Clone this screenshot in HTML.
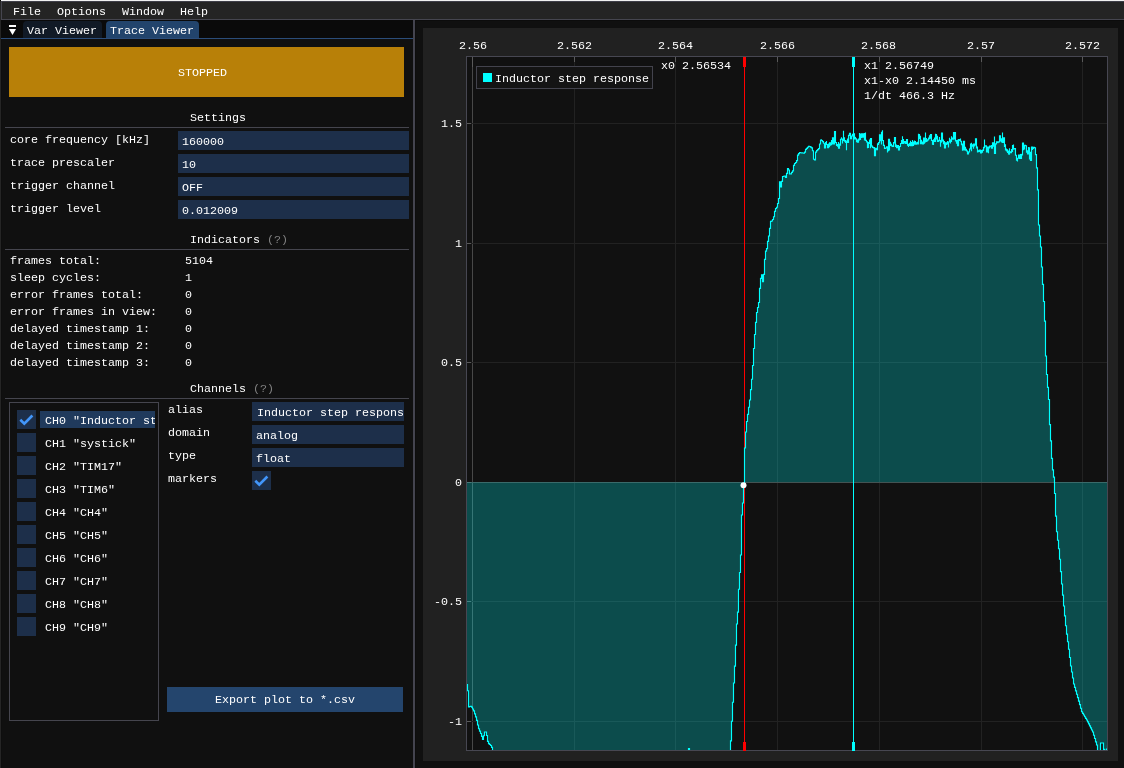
<!DOCTYPE html>
<html><head><meta charset="utf-8">
<style>
*{margin:0;padding:0;box-sizing:border-box}
html,body{width:1124px;height:768px;overflow:hidden;background:#101010}
body{position:relative;font-family:"Liberation Mono",monospace;font-size:11.67px;line-height:13px;color:#fff}
.a{position:absolute}
.t{position:absolute;white-space:pre;height:13px;margin-top:2px}
.g{color:#808080}
.fld{position:absolute;background:#1d2f4a;height:19px}
.chk{position:absolute;background:#1d2f4a;width:19px;height:19px}
</style></head><body><div id="root" style="position:absolute;left:0;top:0;width:1124px;height:768px;will-change:transform">
<!-- top line and menu bar -->
<div class="a" style="left:0;top:0;width:1124px;height:1px;background:#f0f0f0"></div>
<div class="a" style="left:0;top:0;width:1px;height:1px;background:#050505"></div>
<div class="a" style="left:0;top:1px;width:1124px;height:18px;background:#242424"></div>
<div class="a" style="left:1px;top:1px;width:1123px;height:1px;background:#3e3e48"></div>
<div class="a" style="left:1px;top:1px;width:1px;height:19px;background:#45454f"></div>
<div class="a" style="left:1px;top:19px;width:1123px;height:1px;background:#45454f"></div>
<div class="t" style="left:13px;top:4px">File</div>
<div class="t" style="left:57px;top:4px">Options</div>
<div class="t" style="left:122px;top:4px">Window</div>
<div class="t" style="left:180px;top:4px">Help</div>

<!-- left window -->
<div class="a" style="left:0;top:20px;width:413px;height:748px;background:#101010"></div>
<div class="a" style="left:0;top:1px;width:1px;height:767px;background:#252525"></div>
<div class="a" style="left:1px;top:39px;width:1px;height:729px;background:#0e0e0e"></div>
<div class="a" style="left:1px;top:20px;width:412px;height:18px;background:#0a0a0a"></div>
<div class="a" style="left:1px;top:38px;width:412px;height:1px;background:#2b4d7a"></div>
<!-- tab dropdown icon -->
<div class="a" style="left:9px;top:25px;width:7px;height:2px;background:#fff"></div>
<svg class="a" style="left:0;top:0" width="30" height="40"><polygon points="9,29 16,29 12.5,35" fill="#fff"/></svg>
<div class="a" style="left:23px;top:21px;width:79px;height:17px;background:#111a26;border-radius:4px 4px 0 0"></div>
<div class="t" style="left:27px;top:23px">Var Viewer</div>
<div class="a" style="left:106px;top:21px;width:93px;height:17px;background:#22446c;border-radius:4px 4px 0 0"></div>
<div class="t" style="left:110px;top:23px">Trace Viewer</div>

<div class="a" style="left:9px;top:47px;width:395px;height:50px;background:#b88008"></div>
<div class="t" style="left:178px;top:65px">STOPPED</div>

<div class="t" style="left:190px;top:110px">Settings</div>
<div class="a" style="left:5px;top:127px;width:404px;height:1px;background:#45454e"></div>
<div class="t" style="left:10px;top:132px">core frequency [kHz]</div>
<div class="t" style="left:10px;top:155px">trace prescaler</div>
<div class="t" style="left:10px;top:178px">trigger channel</div>
<div class="t" style="left:10px;top:201px">trigger level</div>
<div class="fld" style="left:178px;top:131px;width:231px"></div>
<div class="fld" style="left:178px;top:154px;width:231px"></div>
<div class="fld" style="left:178px;top:177px;width:231px"></div>
<div class="fld" style="left:178px;top:200px;width:231px"></div>
<div class="t" style="left:182px;top:134px">160000</div>
<div class="t" style="left:182px;top:157px">10</div>
<div class="t" style="left:182px;top:180px">OFF</div>
<div class="t" style="left:182px;top:203px">0.012009</div>

<div class="t" style="left:190px;top:232px">Indicators <span class="g">(?)</span></div>
<div class="a" style="left:5px;top:249px;width:404px;height:1px;background:#45454e"></div>
<div class="t" style="left:10px;top:253px">frames total:</div>
<div class="t" style="left:10px;top:270px">sleep cycles:</div>
<div class="t" style="left:10px;top:287px">error frames total:</div>
<div class="t" style="left:10px;top:304px">error frames in view:</div>
<div class="t" style="left:10px;top:321px">delayed timestamp 1:</div>
<div class="t" style="left:10px;top:338px">delayed timestamp 2:</div>
<div class="t" style="left:10px;top:355px">delayed timestamp 3:</div>
<div class="t" style="left:185px;top:253px">5104</div>
<div class="t" style="left:185px;top:270px">1</div>
<div class="t" style="left:185px;top:287px">0</div>
<div class="t" style="left:185px;top:304px">0</div>
<div class="t" style="left:185px;top:321px">0</div>
<div class="t" style="left:185px;top:338px">0</div>
<div class="t" style="left:185px;top:355px">0</div>

<div class="t" style="left:190px;top:381px">Channels <span class="g">(?)</span></div>
<div class="a" style="left:5px;top:398px;width:404px;height:1px;background:#45454e"></div>
<!-- child window -->
<div class="a" style="left:9px;top:402px;width:150px;height:319px;border:1px solid #45454e"></div>
<div class="a" style="left:40px;top:411px;width:115px;height:17px;background:#203a5c"></div>
<div class="chk" style="left:17px;top:410px"></div><div class="chk" style="left:17px;top:433px"></div><div class="chk" style="left:17px;top:456px"></div><div class="chk" style="left:17px;top:479px"></div><div class="chk" style="left:17px;top:502px"></div><div class="chk" style="left:17px;top:525px"></div><div class="chk" style="left:17px;top:548px"></div><div class="chk" style="left:17px;top:571px"></div><div class="chk" style="left:17px;top:594px"></div><div class="chk" style="left:17px;top:617px"></div>
<svg class="a" style="left:17px;top:410px" width="19" height="19"><path d="M3.3,9.8 L7.3,13.7 L15.4,5.5" fill="none" stroke="#4296fa" stroke-width="2.6"/></svg>
<div class="a" style="left:44px;top:410px;width:111px;height:20px;overflow:hidden"><div class="t" style="left:1px;top:3px">CH0 "Inductor step response"</div></div>
<div class="t" style="left:45px;top:436px">CH1 "systick"</div><div class="t" style="left:45px;top:459px">CH2 "TIM17"</div><div class="t" style="left:45px;top:482px">CH3 "TIM6"</div><div class="t" style="left:45px;top:505px">CH4 "CH4"</div><div class="t" style="left:45px;top:528px">CH5 "CH5"</div><div class="t" style="left:45px;top:551px">CH6 "CH6"</div><div class="t" style="left:45px;top:574px">CH7 "CH7"</div><div class="t" style="left:45px;top:597px">CH8 "CH8"</div><div class="t" style="left:45px;top:620px">CH9 "CH9"</div>

<div class="t" style="left:168px;top:402px">alias</div>
<div class="t" style="left:168px;top:425px">domain</div>
<div class="t" style="left:168px;top:448px">type</div>
<div class="t" style="left:168px;top:471px">markers</div>
<div class="fld" style="left:252px;top:402px;width:152px;overflow:hidden"><div class="t" style="left:5px;top:3px">Inductor step response</div></div>
<div class="fld" style="left:252px;top:425px;width:152px"></div>
<div class="fld" style="left:252px;top:448px;width:152px"></div>
<div class="t" style="left:256px;top:428px">analog</div>
<div class="t" style="left:256px;top:451px">float</div>
<div class="chk" style="left:252px;top:471px"></div>
<svg class="a" style="left:252px;top:471px" width="19" height="19"><path d="M3.3,9.8 L7.3,13.7 L15.4,5.5" fill="none" stroke="#4296fa" stroke-width="2.6"/></svg>

<div class="a" style="left:167px;top:687px;width:236px;height:25px;background:#24456d"></div>
<div class="t" style="left:215px;top:692px">Export plot to *.csv</div>

<!-- divider -->
<div class="a" style="left:413px;top:20px;width:2px;height:748px;background:#44444f"></div>

<!-- right window -->
<div class="a" style="left:415px;top:20px;width:709px;height:748px;background:#101010"></div>
<div class="a" style="left:415px;top:20px;width:709px;height:1px;background:#0c0c0c"></div>
<div class="a" style="left:415px;top:20px;width:1px;height:748px;background:#0d0d0d"></div>
<div class="a" style="left:423px;top:28px;width:695px;height:733px;background:#212121"></div>
<svg class="a" style="left:0;top:0" width="1124" height="768">
<defs><clipPath id="pc"><rect x="467" y="57" width="640" height="693"/></clipPath></defs>
<rect x="466.5" y="56.5" width="641" height="694" fill="#111111" stroke="#474752" stroke-width="1"/>
<g clip-path="url(#pc)">
<rect x="472" y="57" width="1" height="693" fill="#484848"/>
<rect x="472" y="57" width="1" height="10" fill="#5a5a5a"/>
<rect x="574" y="57" width="1" height="693" fill="#222222"/>
<rect x="574" y="57" width="1" height="5" fill="#5a5a5a"/>
<rect x="675" y="57" width="1" height="693" fill="#222222"/>
<rect x="675" y="57" width="1" height="5" fill="#5a5a5a"/>
<rect x="777" y="57" width="1" height="693" fill="#222222"/>
<rect x="777" y="57" width="1" height="5" fill="#5a5a5a"/>
<rect x="879" y="57" width="1" height="693" fill="#222222"/>
<rect x="879" y="57" width="1" height="5" fill="#5a5a5a"/>
<rect x="981" y="57" width="1" height="693" fill="#222222"/>
<rect x="981" y="57" width="1" height="5" fill="#5a5a5a"/>
<rect x="1082" y="57" width="1" height="693" fill="#222222"/>
<rect x="1082" y="57" width="1" height="5" fill="#5a5a5a"/>
<rect x="467" y="123" width="640" height="1" fill="#222222"/>
<rect x="467" y="123" width="4" height="1" fill="#5a5a5a"/>
<rect x="467" y="243" width="640" height="1" fill="#222222"/>
<rect x="467" y="243" width="4" height="1" fill="#5a5a5a"/>
<rect x="467" y="362" width="640" height="1" fill="#222222"/>
<rect x="467" y="362" width="4" height="1" fill="#5a5a5a"/>
<rect x="467" y="482" width="640" height="1" fill="#484848"/>
<rect x="467" y="482" width="4" height="1" fill="#5a5a5a"/>
<rect x="467" y="601" width="640" height="1" fill="#222222"/>
<rect x="467" y="601" width="4" height="1" fill="#5a5a5a"/>
<rect x="467" y="721" width="640" height="1" fill="#222222"/>
<rect x="467" y="721" width="4" height="1" fill="#5a5a5a"/>
<rect x="744" y="57" width="1" height="693" fill="#ff0000"/>
<rect x="743" y="57" width="3" height="10" fill="#ff0000"/>
<rect x="853" y="57" width="1" height="693" fill="#00ffff"/>
<rect x="852" y="57" width="3" height="10" fill="#00ffff"/>
<path d="M466.5,482.3 L466.5,684.5 L467.5,684.5 L467.5,690.7 L468.5,690.7 L468.5,706.9 L469.5,706.9 L469.5,706.5 L470.5,706.5 L470.5,706.2 L471.5,706.2 L471.5,707.1 L472.5,707.1 L472.5,709.0 L473.5,709.0 L473.5,710.8 L474.5,710.8 L474.5,713.8 L475.5,713.8 L475.5,716.8 L476.5,716.8 L476.5,720.4 L477.5,720.4 L477.5,725.0 L478.5,725.0 L478.5,728.7 L479.5,728.7 L479.5,731.1 L480.5,731.1 L480.5,733.5 L481.5,733.5 L481.5,736.4 L482.5,736.4 L482.5,739.4 L483.5,739.4 L483.5,735.7 L484.5,735.7 L484.5,732.0 L485.5,732.0 L485.5,732.0 L486.5,732.0 L486.5,735.5 L487.5,735.5 L487.5,741.3 L488.5,741.3 L488.5,743.6 L489.5,743.6 L489.5,744.5 L490.5,744.5 L490.5,745.5 L491.5,745.5 L491.5,747.3 L492.5,747.3 L492.5,750.5 L493.5,750.5 L493.5,755.2 L494.5,755.2 L494.5,760.0 L495.5,760.0 L495.5,760.0 L496.5,760.0 L496.5,760.0 L497.5,760.0 L497.5,760.0 L498.5,760.0 L498.5,760.0 L499.5,760.0 L499.5,760.0 L500.5,760.0 L500.5,760.0 L501.5,760.0 L501.5,760.0 L502.5,760.0 L502.5,760.0 L503.5,760.0 L503.5,760.0 L504.5,760.0 L504.5,760.0 L505.5,760.0 L505.5,760.0 L506.5,760.0 L506.5,760.0 L507.5,760.0 L507.5,760.0 L508.5,760.0 L508.5,760.0 L509.5,760.0 L509.5,760.0 L510.5,760.0 L510.5,760.0 L511.5,760.0 L511.5,760.0 L512.5,760.0 L512.5,760.0 L513.5,760.0 L513.5,760.0 L514.5,760.0 L514.5,760.0 L515.5,760.0 L515.5,760.0 L516.5,760.0 L516.5,760.0 L517.5,760.0 L517.5,760.0 L518.5,760.0 L518.5,760.0 L519.5,760.0 L519.5,760.0 L520.5,760.0 L520.5,760.0 L521.5,760.0 L521.5,760.0 L522.5,760.0 L522.5,760.0 L523.5,760.0 L523.5,760.0 L524.5,760.0 L524.5,760.0 L525.5,760.0 L525.5,760.0 L526.5,760.0 L526.5,760.0 L527.5,760.0 L527.5,760.0 L528.5,760.0 L528.5,760.0 L529.5,760.0 L529.5,760.0 L530.5,760.0 L530.5,760.0 L531.5,760.0 L531.5,760.0 L532.5,760.0 L532.5,760.0 L533.5,760.0 L533.5,760.0 L534.5,760.0 L534.5,760.0 L535.5,760.0 L535.5,760.0 L536.5,760.0 L536.5,760.0 L537.5,760.0 L537.5,760.0 L538.5,760.0 L538.5,760.0 L539.5,760.0 L539.5,760.0 L540.5,760.0 L540.5,760.0 L541.5,760.0 L541.5,760.0 L542.5,760.0 L542.5,760.0 L543.5,760.0 L543.5,760.0 L544.5,760.0 L544.5,760.0 L545.5,760.0 L545.5,760.0 L546.5,760.0 L546.5,760.0 L547.5,760.0 L547.5,760.0 L548.5,760.0 L548.5,760.0 L549.5,760.0 L549.5,760.0 L550.5,760.0 L550.5,760.0 L551.5,760.0 L551.5,760.0 L552.5,760.0 L552.5,760.0 L553.5,760.0 L553.5,760.0 L554.5,760.0 L554.5,760.0 L555.5,760.0 L555.5,760.0 L556.5,760.0 L556.5,760.0 L557.5,760.0 L557.5,760.0 L558.5,760.0 L558.5,760.0 L559.5,760.0 L559.5,760.0 L560.5,760.0 L560.5,760.0 L561.5,760.0 L561.5,760.0 L562.5,760.0 L562.5,760.0 L563.5,760.0 L563.5,760.0 L564.5,760.0 L564.5,760.0 L565.5,760.0 L565.5,760.0 L566.5,760.0 L566.5,760.0 L567.5,760.0 L567.5,760.0 L568.5,760.0 L568.5,760.0 L569.5,760.0 L569.5,760.0 L570.5,760.0 L570.5,760.0 L571.5,760.0 L571.5,760.0 L572.5,760.0 L572.5,760.0 L573.5,760.0 L573.5,760.0 L574.5,760.0 L574.5,760.0 L575.5,760.0 L575.5,760.0 L576.5,760.0 L576.5,760.0 L577.5,760.0 L577.5,760.0 L578.5,760.0 L578.5,760.0 L579.5,760.0 L579.5,760.0 L580.5,760.0 L580.5,760.0 L581.5,760.0 L581.5,760.0 L582.5,760.0 L582.5,760.0 L583.5,760.0 L583.5,760.0 L584.5,760.0 L584.5,760.0 L585.5,760.0 L585.5,760.0 L586.5,760.0 L586.5,760.0 L587.5,760.0 L587.5,760.0 L588.5,760.0 L588.5,760.0 L589.5,760.0 L589.5,760.0 L590.5,760.0 L590.5,760.0 L591.5,760.0 L591.5,760.0 L592.5,760.0 L592.5,760.0 L593.5,760.0 L593.5,760.0 L594.5,760.0 L594.5,760.0 L595.5,760.0 L595.5,760.0 L596.5,760.0 L596.5,760.0 L597.5,760.0 L597.5,760.0 L598.5,760.0 L598.5,760.0 L599.5,760.0 L599.5,760.0 L600.5,760.0 L600.5,760.0 L601.5,760.0 L601.5,760.0 L602.5,760.0 L602.5,760.0 L603.5,760.0 L603.5,760.0 L604.5,760.0 L604.5,760.0 L605.5,760.0 L605.5,760.0 L606.5,760.0 L606.5,760.0 L607.5,760.0 L607.5,760.0 L608.5,760.0 L608.5,760.0 L609.5,760.0 L609.5,760.0 L610.5,760.0 L610.5,760.0 L611.5,760.0 L611.5,760.0 L612.5,760.0 L612.5,760.0 L613.5,760.0 L613.5,760.0 L614.5,760.0 L614.5,760.0 L615.5,760.0 L615.5,760.0 L616.5,760.0 L616.5,760.0 L617.5,760.0 L617.5,760.0 L618.5,760.0 L618.5,760.0 L619.5,760.0 L619.5,760.0 L620.5,760.0 L620.5,760.0 L621.5,760.0 L621.5,760.0 L622.5,760.0 L622.5,760.0 L623.5,760.0 L623.5,760.0 L624.5,760.0 L624.5,760.0 L625.5,760.0 L625.5,760.0 L626.5,760.0 L626.5,760.0 L627.5,760.0 L627.5,760.0 L628.5,760.0 L628.5,760.0 L629.5,760.0 L629.5,760.0 L630.5,760.0 L630.5,760.0 L631.5,760.0 L631.5,760.0 L632.5,760.0 L632.5,760.0 L633.5,760.0 L633.5,760.0 L634.5,760.0 L634.5,760.0 L635.5,760.0 L635.5,760.0 L636.5,760.0 L636.5,760.0 L637.5,760.0 L637.5,760.0 L638.5,760.0 L638.5,760.0 L639.5,760.0 L639.5,760.0 L640.5,760.0 L640.5,760.0 L641.5,760.0 L641.5,760.0 L642.5,760.0 L642.5,760.0 L643.5,760.0 L643.5,760.0 L644.5,760.0 L644.5,760.0 L645.5,760.0 L645.5,760.0 L646.5,760.0 L646.5,760.0 L647.5,760.0 L647.5,760.0 L648.5,760.0 L648.5,760.0 L649.5,760.0 L649.5,760.0 L650.5,760.0 L650.5,760.0 L651.5,760.0 L651.5,760.0 L652.5,760.0 L652.5,760.0 L653.5,760.0 L653.5,760.0 L654.5,760.0 L654.5,760.0 L655.5,760.0 L655.5,760.0 L656.5,760.0 L656.5,760.0 L657.5,760.0 L657.5,760.0 L658.5,760.0 L658.5,760.0 L659.5,760.0 L659.5,760.0 L660.5,760.0 L660.5,760.0 L661.5,760.0 L661.5,760.0 L662.5,760.0 L662.5,760.0 L663.5,760.0 L663.5,760.0 L664.5,760.0 L664.5,760.0 L665.5,760.0 L665.5,760.0 L666.5,760.0 L666.5,760.0 L667.5,760.0 L667.5,760.0 L668.5,760.0 L668.5,760.0 L669.5,760.0 L669.5,760.0 L670.5,760.0 L670.5,760.0 L671.5,760.0 L671.5,760.0 L672.5,760.0 L672.5,760.0 L673.5,760.0 L673.5,760.0 L674.5,760.0 L674.5,760.0 L675.5,760.0 L675.5,760.0 L676.5,760.0 L676.5,760.0 L677.5,760.0 L677.5,760.0 L678.5,760.0 L678.5,760.0 L679.5,760.0 L679.5,760.0 L680.5,760.0 L680.5,760.0 L681.5,760.0 L681.5,760.0 L682.5,760.0 L682.5,760.0 L683.5,760.0 L683.5,760.0 L684.5,760.0 L684.5,760.0 L685.5,760.0 L685.5,760.0 L686.5,760.0 L686.5,760.0 L687.5,760.0 L687.5,754.2 L688.5,754.2 L688.5,748.5 L689.5,748.5 L689.5,754.2 L690.5,754.2 L690.5,760.0 L691.5,760.0 L691.5,760.0 L692.5,760.0 L692.5,760.0 L693.5,760.0 L693.5,760.0 L694.5,760.0 L694.5,760.0 L695.5,760.0 L695.5,760.0 L696.5,760.0 L696.5,760.0 L697.5,760.0 L697.5,760.0 L698.5,760.0 L698.5,760.0 L699.5,760.0 L699.5,760.0 L700.5,760.0 L700.5,760.0 L701.5,760.0 L701.5,760.0 L702.5,760.0 L702.5,760.0 L703.5,760.0 L703.5,760.0 L704.5,760.0 L704.5,760.0 L705.5,760.0 L705.5,760.0 L706.5,760.0 L706.5,760.0 L707.5,760.0 L707.5,760.0 L708.5,760.0 L708.5,760.0 L709.5,760.0 L709.5,760.0 L710.5,760.0 L710.5,760.0 L711.5,760.0 L711.5,760.0 L712.5,760.0 L712.5,760.0 L713.5,760.0 L713.5,760.0 L714.5,760.0 L714.5,760.0 L715.5,760.0 L715.5,760.0 L716.5,760.0 L716.5,760.0 L717.5,760.0 L717.5,760.0 L718.5,760.0 L718.5,760.0 L719.5,760.0 L719.5,760.0 L720.5,760.0 L720.5,760.0 L721.5,760.0 L721.5,760.0 L722.5,760.0 L722.5,760.0 L723.5,760.0 L723.5,760.0 L724.5,760.0 L724.5,760.0 L725.5,760.0 L725.5,760.0 L726.5,760.0 L726.5,760.0 L727.5,760.0 L727.5,760.0 L728.5,760.0 L728.5,760.0 L729.5,760.0 L729.5,760.0 L730.5,760.0 L730.5,740.8 L731.5,740.8 L731.5,721.2 L732.5,721.2 L732.5,702.2 L733.5,702.2 L733.5,683.0 L734.5,683.0 L734.5,666.1 L735.5,666.1 L735.5,645.1 L736.5,645.1 L736.5,624.0 L737.5,624.0 L737.5,612.1 L738.5,612.1 L738.5,589.2 L739.5,589.2 L739.5,572.5 L740.5,572.5 L740.5,555.0 L741.5,555.0 L741.5,515.0 L742.5,515.0 L742.5,503.0 L743.5,503.0 L743.5,486.0 L744.5,486.0 L744.5,448.0 L745.5,448.0 L745.5,432.0 L746.5,432.0 L746.5,421.5 L747.5,421.5 L747.5,414.3 L748.5,414.3 L748.5,407.2 L749.5,407.2 L749.5,400.0 L750.5,400.0 L750.5,389.6 L751.5,389.6 L751.5,379.2 L752.5,379.2 L752.5,365.5 L753.5,365.5 L753.5,348.5 L754.5,348.5 L754.5,334.5 L755.5,334.5 L755.5,322.4 L756.5,322.4 L756.5,312.5 L757.5,312.5 L757.5,307.5 L758.5,307.5 L758.5,302.5 L759.5,302.5 L759.5,288.4 L760.5,288.4 L760.5,278.3 L761.5,278.3 L761.5,274.8 L762.5,274.8 L762.5,281.7 L763.5,281.7 L763.5,274.4 L764.5,274.4 L764.5,259.3 L765.5,259.3 L765.5,251.1 L766.5,251.1 L766.5,248.6 L767.5,248.6 L767.5,241.4 L768.5,241.4 L768.5,236.0 L769.5,236.0 L769.5,228.4 L770.5,228.4 L770.5,221.4 L771.5,221.4 L771.5,221.0 L772.5,221.0 L772.5,219.5 L773.5,219.5 L773.5,216.7 L774.5,216.7 L774.5,211.4 L775.5,211.4 L775.5,208.5 L776.5,208.5 L776.5,207.2 L777.5,207.2 L777.5,203.5 L778.5,203.5 L778.5,198.5 L779.5,198.5 L779.5,181.8 L780.5,181.8 L780.5,186.8 L781.5,186.8 L781.5,181.4 L782.5,181.4 L782.5,176.5 L783.5,176.5 L783.5,176.2 L784.5,176.2 L784.5,176.0 L785.5,176.0 L785.5,177.4 L786.5,177.4 L786.5,173.4 L787.5,173.4 L787.5,168.5 L788.5,168.5 L788.5,170.0 L789.5,170.0 L789.5,173.8 L790.5,173.8 L790.5,173.9 L791.5,173.9 L791.5,172.4 L792.5,172.4 L792.5,170.8 L793.5,170.8 L793.5,165.4 L794.5,165.4 L794.5,163.5 L795.5,163.5 L795.5,162.5 L796.5,162.5 L796.5,160.6 L797.5,160.6 L797.5,155.1 L798.5,155.1 L798.5,153.6 L799.5,153.6 L799.5,152.5 L800.5,152.5 L800.5,152.7 L801.5,152.7 L801.5,152.8 L802.5,152.8 L802.5,153.0 L803.5,153.0 L803.5,153.1 L804.5,153.1 L804.5,152.1 L805.5,152.1 L805.5,149.3 L806.5,149.3 L806.5,148.3 L807.5,148.3 L807.5,147.2 L808.5,147.2 L808.5,146.2 L809.5,146.2 L809.5,146.5 L810.5,146.5 L810.5,147.1 L811.5,147.1 L811.5,147.8 L812.5,147.8 L812.5,150.7 L813.5,150.7 L813.5,159.2 L814.5,159.2 L814.5,159.9 L815.5,159.9 L815.5,152.1 L816.5,152.1 L816.5,150.6 L817.5,150.6 L817.5,149.6 L818.5,149.6 L818.5,148.6 L818.5,148.6 L818.5,148.6 L819.5,148.6 L819.5,144.0 L819.5,143.7 L819.5,143.9 L820.5,143.9 L820.5,139.7 L820.5,139.7 L820.5,139.9 L821.5,139.9 L821.5,141.1 L821.5,140.8 L821.5,140.5 L822.5,140.5 L822.5,141.2 L822.5,140.9 L822.5,141.6 L823.5,141.6 L823.5,143.0 L823.5,143.6 L823.5,143.3 L824.5,143.3 L824.5,143.2 L824.5,147.7 L824.5,147.8 L825.5,147.8 L825.5,143.9 L825.5,145.3 L825.5,142.5 L826.5,142.5 L826.5,142.4 L826.5,140.9 L826.5,144.5 L827.5,144.5 L827.5,146.2 L827.5,147.1 L827.5,147.6 L828.5,147.6 L828.5,144.7 L828.5,144.9 L828.5,144.0 L829.5,144.0 L829.5,147.3 L829.5,147.0 L829.5,142.9 L830.5,142.9 L830.5,143.8 L830.5,145.7 L830.5,144.7 L831.5,144.7 L831.5,141.4 L831.5,140.1 L831.5,142.0 L832.5,142.0 L832.5,144.5 L832.5,140.6 L832.5,137.7 L833.5,137.7 L833.5,143.9 L833.5,142.9 L833.5,144.0 L834.5,144.0 L834.5,138.9 L834.5,139.8 L834.5,131.6 L835.5,131.6 L835.5,142.2 L835.5,142.2 L835.5,142.5 L836.5,142.5 L836.5,144.1 L836.5,145.9 L836.5,144.6 L837.5,144.6 L837.5,145.0 L837.5,145.6 L837.5,146.1 L838.5,146.1 L838.5,142.1 L838.5,144.1 L838.5,148.1 L839.5,148.1 L839.5,143.9 L839.5,143.6 L839.5,145.1 L840.5,145.1 L840.5,142.1 L840.5,140.5 L840.5,139.2 L841.5,139.2 L841.5,138.5 L841.5,137.2 L841.5,139.1 L842.5,139.1 L842.5,141.4 L842.5,143.4 L842.5,140.3 L843.5,140.3 L843.5,130.8 L843.5,138.7 L843.5,137.8 L844.5,137.8 L844.5,140.0 L844.5,141.8 L844.5,140.6 L845.5,140.6 L845.5,141.4 L845.5,142.9 L845.5,141.0 L846.5,141.0 L846.5,150.3 L846.5,142.4 L846.5,141.5 L847.5,141.5 L847.5,138.4 L847.5,141.3 L847.5,142.4 L848.5,142.4 L848.5,137.2 L848.5,137.0 L848.5,135.3 L849.5,135.3 L849.5,135.9 L849.5,135.8 L849.5,133.4 L850.5,133.4 L850.5,135.4 L850.5,135.5 L850.5,138.7 L851.5,138.7 L851.5,138.6 L851.5,137.1 L851.5,136.0 L852.5,136.0 L852.5,133.8 L852.5,136.1 L852.5,134.3 L853.5,134.3 L853.5,139.4 L853.5,133.3 L853.5,133.8 L854.5,133.8 L854.5,139.4 L854.5,137.6 L854.5,137.3 L855.5,137.3 L855.5,137.1 L855.5,137.5 L855.5,138.8 L856.5,138.8 L856.5,142.3 L856.5,141.8 L856.5,140.8 L857.5,140.8 L857.5,140.8 L857.5,139.6 L857.5,142.1 L858.5,142.1 L858.5,140.2 L858.5,140.7 L858.5,139.1 L859.5,139.1 L859.5,140.6 L859.5,133.0 L859.5,139.4 L860.5,139.4 L860.5,133.5 L860.5,135.9 L860.5,137.3 L861.5,137.3 L861.5,134.5 L861.5,136.5 L861.5,133.7 L862.5,133.7 L862.5,134.6 L862.5,135.4 L862.5,137.2 L863.5,137.2 L863.5,133.3 L863.5,133.3 L863.5,134.6 L864.5,134.6 L864.5,134.7 L864.5,140.6 L864.5,133.6 L865.5,133.6 L865.5,132.5 L865.5,135.8 L865.5,140.3 L866.5,140.3 L866.5,142.6 L866.5,142.1 L866.5,141.7 L867.5,141.7 L867.5,144.9 L867.5,148.2 L867.5,147.5 L868.5,147.5 L868.5,147.0 L868.5,147.3 L868.5,142.5 L869.5,142.5 L869.5,139.5 L869.5,142.1 L869.5,143.5 L870.5,143.5 L870.5,148.3 L870.5,139.8 L870.5,138.5 L871.5,138.5 L871.5,141.5 L871.5,142.5 L871.5,146.2 L872.5,146.2 L872.5,145.4 L872.5,147.0 L872.5,147.3 L873.5,147.3 L873.5,148.5 L873.5,148.5 L873.5,148.0 L874.5,148.0 L874.5,147.1 L874.5,149.3 L874.5,155.7 L875.5,155.7 L875.5,152.9 L875.5,148.6 L875.5,148.2 L876.5,148.2 L876.5,148.2 L876.5,148.9 L876.5,149.7 L877.5,149.7 L877.5,149.1 L877.5,143.2 L877.5,144.3 L878.5,144.3 L878.5,143.2 L878.5,143.3 L878.5,142.6 L879.5,142.6 L879.5,137.7 L879.5,138.4 L879.5,134.8 L880.5,134.8 L880.5,140.2 L880.5,139.2 L880.5,140.6 L881.5,140.6 L881.5,141.5 L881.5,144.4 L881.5,132.3 L882.5,132.3 L882.5,136.5 L882.5,130.2 L882.5,140.5 L883.5,140.5 L883.5,144.3 L883.5,143.2 L883.5,145.4 L884.5,145.4 L884.5,147.6 L884.5,147.6 L884.5,148.5 L885.5,148.5 L885.5,147.8 L885.5,148.2 L885.5,148.0 L886.5,148.0 L886.5,146.6 L886.5,148.0 L886.5,146.9 L887.5,146.9 L887.5,152.4 L887.5,150.5 L887.5,150.6 L888.5,150.6 L888.5,147.4 L888.5,146.9 L888.5,139.2 L889.5,139.2 L889.5,146.9 L889.5,150.4 L889.5,145.4 L890.5,145.4 L890.5,144.2 L890.5,141.8 L890.5,144.1 L891.5,144.1 L891.5,143.8 L891.5,144.4 L891.5,145.8 L892.5,145.8 L892.5,146.1 L892.5,146.0 L892.5,146.5 L893.5,146.5 L893.5,143.9 L893.5,141.9 L893.5,142.5 L894.5,142.5 L894.5,143.4 L894.5,142.7 L894.5,137.5 L895.5,137.5 L895.5,143.0 L895.5,143.8 L895.5,146.3 L896.5,146.3 L896.5,144.5 L896.5,147.3 L896.5,147.6 L897.5,147.6 L897.5,146.4 L897.5,146.7 L897.5,145.6 L898.5,145.6 L898.5,146.3 L898.5,146.1 L898.5,150.0 L899.5,150.0 L899.5,146.3 L899.5,147.8 L899.5,146.5 L900.5,146.5 L900.5,145.0 L900.5,143.7 L900.5,143.5 L901.5,143.5 L901.5,142.9 L901.5,140.0 L901.5,140.6 L902.5,140.6 L902.5,140.9 L902.5,136.2 L902.5,143.5 L903.5,143.5 L903.5,141.6 L903.5,139.1 L903.5,143.0 L904.5,143.0 L904.5,142.0 L904.5,140.9 L904.5,141.5 L905.5,141.5 L905.5,142.5 L905.5,141.8 L905.5,143.5 L906.5,143.5 L906.5,143.9 L906.5,140.2 L906.5,139.6 L907.5,139.6 L907.5,145.6 L907.5,145.7 L907.5,145.5 L908.5,145.5 L908.5,147.0 L908.5,146.1 L908.5,144.4 L909.5,144.4 L909.5,144.6 L909.5,146.1 L909.5,143.2 L910.5,143.2 L910.5,140.8 L910.5,144.3 L910.5,145.7 L911.5,145.7 L911.5,141.9 L911.5,142.5 L911.5,145.7 L912.5,145.7 L912.5,144.7 L912.5,140.0 L912.5,142.6 L913.5,142.6 L913.5,146.0 L913.5,142.1 L913.5,142.0 L914.5,142.0 L914.5,141.1 L914.5,140.4 L914.5,144.2 L915.5,144.2 L915.5,141.0 L915.5,142.0 L915.5,144.1 L916.5,144.1 L916.5,142.3 L916.5,144.5 L916.5,143.0 L917.5,143.0 L917.5,143.2 L917.5,141.8 L917.5,143.8 L918.5,143.8 L918.5,133.7 L918.5,140.8 L918.5,138.3 L919.5,138.3 L919.5,134.1 L919.5,138.2 L919.5,136.4 L920.5,136.4 L920.5,140.6 L920.5,142.4 L920.5,143.7 L921.5,143.7 L921.5,139.7 L921.5,140.9 L921.5,142.1 L922.5,142.1 L922.5,143.8 L922.5,142.9 L922.5,144.0 L923.5,144.0 L923.5,142.6 L923.5,144.1 L923.5,138.0 L924.5,138.0 L924.5,143.7 L924.5,142.8 L924.5,141.9 L925.5,141.9 L925.5,140.5 L925.5,132.4 L925.5,141.5 L926.5,141.5 L926.5,141.1 L926.5,138.0 L926.5,140.9 L927.5,140.9 L927.5,141.5 L927.5,140.4 L927.5,139.8 L928.5,139.8 L928.5,137.6 L928.5,138.5 L928.5,138.7 L929.5,138.7 L929.5,135.3 L929.5,138.1 L929.5,138.0 L930.5,138.0 L930.5,138.8 L930.5,138.0 L930.5,134.6 L931.5,134.6 L931.5,137.9 L931.5,140.2 L931.5,140.5 L932.5,140.5 L932.5,142.7 L932.5,144.7 L932.5,144.5 L933.5,144.5 L933.5,141.9 L933.5,140.6 L933.5,139.9 L934.5,139.9 L934.5,137.5 L934.5,141.3 L934.5,141.4 L935.5,141.4 L935.5,138.2 L935.5,133.7 L935.5,138.8 L936.5,138.8 L936.5,134.0 L936.5,139.6 L936.5,136.2 L937.5,136.2 L937.5,138.4 L937.5,139.2 L937.5,141.3 L938.5,141.3 L938.5,141.3 L938.5,141.1 L938.5,140.2 L939.5,140.2 L939.5,141.3 L939.5,137.0 L939.5,140.2 L940.5,140.2 L940.5,139.9 L940.5,146.7 L940.5,142.1 L941.5,142.1 L941.5,142.1 L941.5,142.6 L941.5,133.0 L942.5,133.0 L942.5,134.3 L942.5,139.7 L942.5,141.0 L943.5,141.0 L943.5,139.7 L943.5,139.5 L943.5,143.6 L944.5,143.6 L944.5,141.1 L944.5,141.1 L944.5,148.0 L945.5,148.0 L945.5,142.4 L945.5,145.2 L945.5,142.8 L946.5,142.8 L946.5,144.9 L946.5,142.4 L946.5,144.0 L947.5,144.0 L947.5,141.0 L947.5,141.4 L947.5,143.2 L948.5,143.2 L948.5,143.7 L948.5,147.4 L948.5,142.0 L949.5,142.0 L949.5,138.5 L949.5,137.7 L949.5,142.0 L950.5,142.0 L950.5,143.6 L950.5,139.3 L950.5,141.3 L951.5,141.3 L951.5,136.2 L951.5,137.8 L951.5,138.3 L952.5,138.3 L952.5,138.1 L952.5,137.5 L952.5,139.1 L953.5,139.1 L953.5,132.1 L953.5,134.9 L953.5,137.3 L954.5,137.3 L954.5,139.4 L954.5,133.5 L954.5,132.6 L955.5,132.6 L955.5,134.8 L955.5,138.1 L955.5,140.8 L956.5,140.8 L956.5,140.0 L956.5,141.0 L956.5,143.1 L957.5,143.1 L957.5,142.9 L957.5,139.8 L957.5,145.6 L958.5,145.6 L958.5,139.9 L958.5,143.6 L958.5,139.5 L959.5,139.5 L959.5,140.1 L959.5,139.4 L959.5,140.4 L960.5,140.4 L960.5,138.6 L960.5,141.0 L960.5,141.2 L961.5,141.2 L961.5,144.1 L961.5,144.2 L961.5,144.7 L962.5,144.7 L962.5,147.6 L962.5,150.8 L962.5,144.0 L963.5,144.0 L963.5,150.4 L963.5,148.3 L963.5,141.2 L964.5,141.2 L964.5,150.4 L964.5,147.4 L964.5,147.2 L965.5,147.2 L965.5,149.5 L965.5,150.7 L965.5,149.4 L966.5,149.4 L966.5,151.4 L966.5,149.2 L966.5,150.9 L967.5,150.9 L967.5,150.6 L967.5,151.6 L967.5,154.0 L968.5,154.0 L968.5,152.8 L968.5,151.5 L968.5,151.8 L969.5,151.8 L969.5,149.6 L969.5,148.6 L969.5,148.9 L970.5,148.9 L970.5,145.0 L970.5,143.6 L970.5,144.8 L971.5,144.8 L971.5,142.7 L971.5,151.2 L971.5,146.1 L972.5,146.1 L972.5,144.3 L972.5,145.7 L972.5,146.0 L973.5,146.0 L973.5,148.7 L973.5,147.8 L973.5,144.0 L974.5,144.0 L974.5,143.4 L974.5,146.4 L974.5,145.0 L975.5,145.0 L975.5,145.6 L975.5,144.8 L975.5,138.8 L976.5,138.8 L976.5,147.2 L976.5,148.6 L976.5,147.0 L977.5,147.0 L977.5,147.1 L977.5,150.5 L977.5,151.9 L978.5,151.9 L978.5,152.0 L978.5,150.2 L978.5,150.3 L979.5,150.3 L979.5,149.5 L979.5,152.1 L979.5,150.0 L980.5,150.0 L980.5,151.8 L980.5,150.8 L980.5,152.9 L981.5,152.9 L981.5,149.9 L981.5,152.2 L981.5,152.2 L982.5,152.2 L982.5,150.1 L982.5,149.6 L982.5,150.4 L983.5,150.4 L983.5,146.9 L983.5,147.1 L983.5,147.1 L984.5,147.1 L984.5,148.3 L984.5,139.6 L984.5,145.7 L985.5,145.7 L985.5,145.7 L985.5,146.7 L985.5,145.8 L986.5,145.8 L986.5,146.5 L986.5,150.6 L986.5,152.0 L987.5,152.0 L987.5,150.6 L987.5,147.7 L987.5,147.1 L988.5,147.1 L988.5,153.3 L988.5,149.2 L988.5,147.9 L989.5,147.9 L989.5,146.0 L989.5,147.1 L989.5,146.1 L990.5,146.1 L990.5,146.9 L990.5,147.0 L990.5,146.8 L991.5,146.8 L991.5,145.0 L991.5,145.6 L991.5,148.2 L992.5,148.2 L992.5,143.9 L992.5,148.0 L992.5,142.7 L993.5,142.7 L993.5,144.8 L993.5,146.7 L993.5,145.3 L994.5,145.3 L994.5,136.4 L994.5,143.7 L994.5,153.4 L995.5,153.4 L995.5,145.9 L995.5,144.4 L995.5,143.9 L996.5,143.9 L996.5,144.6 L996.5,144.4 L996.5,141.7 L997.5,141.7 L997.5,142.4 L997.5,143.0 L997.5,142.7 L998.5,142.7 L998.5,142.8 L998.5,142.2 L998.5,141.8 L999.5,141.8 L999.5,139.0 L999.5,140.4 L999.5,135.9 L1000.5,135.9 L1000.5,140.5 L1000.5,139.6 L1000.5,140.9 L1001.5,140.9 L1001.5,138.4 L1001.5,138.2 L1001.5,141.9 L1002.5,141.9 L1002.5,137.7 L1002.5,132.5 L1002.5,142.4 L1003.5,142.4 L1003.5,140.2 L1003.5,140.1 L1003.5,137.9 L1004.5,137.9 L1004.5,143.2 L1004.5,146.9 L1004.5,144.7 L1005.5,144.7 L1005.5,147.0 L1005.5,149.6 L1005.5,149.9 L1006.5,149.9 L1006.5,151.6 L1006.5,148.6 L1006.5,149.7 L1007.5,149.7 L1007.5,152.9 L1007.5,151.6 L1007.5,151.1 L1008.5,151.1 L1008.5,151.8 L1008.5,154.4 L1008.5,154.2 L1009.5,154.2 L1009.5,152.9 L1009.5,148.3 L1009.5,151.8 L1010.5,151.8 L1010.5,152.1 L1010.5,151.7 L1010.5,152.6 L1011.5,152.6 L1011.5,149.4 L1011.5,148.9 L1011.5,150.0 L1012.5,150.0 L1012.5,152.0 L1012.5,149.9 L1012.5,145.6 L1013.5,145.6 L1013.5,149.8 L1013.5,144.4 L1013.5,148.8 L1014.5,148.8 L1014.5,149.6 L1014.5,149.4 L1014.5,148.6 L1015.5,148.6 L1015.5,154.5 L1015.5,154.9 L1015.5,155.2 L1016.5,155.2 L1016.5,159.9 L1016.5,158.0 L1016.5,160.1 L1017.5,160.1 L1017.5,158.7 L1017.5,161.4 L1017.5,158.2 L1018.5,158.2 L1018.5,154.5 L1018.5,156.1 L1018.5,155.5 L1019.5,155.5 L1019.5,154.4 L1019.5,154.4 L1019.5,158.3 L1020.5,158.3 L1020.5,155.6 L1020.5,154.0 L1020.5,154.2 L1021.5,154.2 L1021.5,153.9 L1021.5,159.1 L1021.5,155.0 L1022.5,155.0 L1022.5,154.5 L1022.5,145.3 L1022.5,143.0 L1023.5,143.0 L1023.5,150.2 L1023.5,145.9 L1023.5,149.0 L1024.5,149.0 L1024.5,148.3 L1024.5,145.3 L1024.5,145.2 L1025.5,145.2 L1025.5,145.8 L1025.5,145.4 L1025.5,145.7 L1026.5,145.7 L1026.5,149.4 L1026.5,149.3 L1026.5,152.1 L1027.5,152.1 L1027.5,150.9 L1027.5,150.3 L1027.5,153.8 L1028.5,153.8 L1028.5,147.0 L1028.5,148.8 L1028.5,147.8 L1029.5,147.8 L1029.5,152.1 L1029.5,153.2 L1029.5,159.0 L1030.5,159.0 L1030.5,151.8 L1030.5,152.6 L1030.5,160.5 L1031.5,160.5 L1031.5,155.0 L1031.5,153.2 L1031.5,147.1 L1032.5,147.1 L1032.5,149.3 L1032.5,150.1 L1032.5,148.4 L1033.5,148.4 L1033.5,147.4 L1033.5,148.7 L1033.5,147.4 L1034.5,147.4 L1034.5,147.7 L1034.5,147.7 L1034.5,147.7 L1035.5,147.7 L1035.5,154.6 L1036.5,154.6 L1036.5,167.9 L1037.5,167.9 L1037.5,189.9 L1038.5,189.9 L1038.5,225.0 L1039.5,225.0 L1039.5,236.0 L1040.5,236.0 L1040.5,247.0 L1041.5,247.0 L1041.5,267.0 L1042.5,267.0 L1042.5,284.4 L1043.5,284.4 L1043.5,301.5 L1044.5,301.5 L1044.5,321.1 L1045.5,321.1 L1045.5,356.0 L1046.5,356.0 L1046.5,374.5 L1047.5,374.5 L1047.5,387.4 L1048.5,387.4 L1048.5,399.5 L1049.5,399.5 L1049.5,424.6 L1050.5,424.6 L1050.5,440.8 L1051.5,440.8 L1051.5,458.4 L1052.5,458.4 L1052.5,469.9 L1053.5,469.9 L1053.5,477.1 L1054.5,477.1 L1054.5,493.5 L1055.5,493.5 L1055.5,516.1 L1056.5,516.1 L1056.5,531.7 L1057.5,531.7 L1057.5,540.2 L1058.5,540.2 L1058.5,548.7 L1059.5,548.7 L1059.5,559.2 L1060.5,559.2 L1060.5,571.6 L1061.5,571.6 L1061.5,584.0 L1062.5,584.0 L1062.5,595.1 L1063.5,595.1 L1063.5,606.0 L1064.5,606.0 L1064.5,615.8 L1065.5,615.8 L1065.5,625.7 L1066.5,625.7 L1066.5,634.1 L1067.5,634.1 L1067.5,641.7 L1068.5,641.7 L1068.5,649.2 L1069.5,649.2 L1069.5,657.5 L1070.5,657.5 L1070.5,666.0 L1071.5,666.0 L1071.5,672.0 L1072.5,672.0 L1072.5,678.0 L1073.5,678.0 L1073.5,684.0 L1074.5,684.0 L1074.5,687.4 L1075.5,687.4 L1075.5,690.8 L1076.5,690.8 L1076.5,694.2 L1077.5,694.2 L1077.5,697.6 L1078.5,697.6 L1078.5,701.1 L1079.5,701.1 L1079.5,704.6 L1080.5,704.6 L1080.5,708.2 L1081.5,708.2 L1081.5,711.7 L1082.5,711.7 L1082.5,713.4 L1083.5,713.4 L1083.5,715.0 L1084.5,715.0 L1084.5,716.7 L1085.5,716.7 L1085.5,718.3 L1086.5,718.3 L1086.5,720.0 L1087.5,720.0 L1087.5,721.8 L1088.5,721.8 L1088.5,723.9 L1089.5,723.9 L1089.5,725.9 L1090.5,725.9 L1090.5,727.9 L1091.5,727.9 L1091.5,730.0 L1092.5,730.0 L1092.5,732.0 L1093.5,732.0 L1093.5,735.2 L1094.5,735.2 L1094.5,738.5 L1095.5,738.5 L1095.5,741.8 L1096.5,741.8 L1096.5,745.0 L1097.5,745.0 L1097.5,752.0 L1098.5,752.0 L1098.5,752.0 L1099.5,752.0 L1099.5,752.0 L1100.5,752.0 L1100.5,743.0 L1101.5,743.0 L1101.5,743.0 L1102.5,743.0 L1102.5,743.0 L1103.5,743.0 L1103.5,749.4 L1104.5,749.4 L1104.5,750.2 L1105.5,750.2 L1105.5,751.0 L1106.5,751.0 L1106.5,749.0 L1107.5,749.0 L1107.5,745.7 L1108.5,745.7 L1108.5,743.2 L1108.5,482.3 Z" fill="rgba(0,255,255,0.25)" stroke="none"/>
<path d="M466.5,684.5 L467.5,684.5 L467.5,690.7 L468.5,690.7 L468.5,706.9 L469.5,706.9 L469.5,706.5 L470.5,706.5 L470.5,706.2 L471.5,706.2 L471.5,707.1 L472.5,707.1 L472.5,709.0 L473.5,709.0 L473.5,710.8 L474.5,710.8 L474.5,713.8 L475.5,713.8 L475.5,716.8 L476.5,716.8 L476.5,720.4 L477.5,720.4 L477.5,725.0 L478.5,725.0 L478.5,728.7 L479.5,728.7 L479.5,731.1 L480.5,731.1 L480.5,733.5 L481.5,733.5 L481.5,736.4 L482.5,736.4 L482.5,739.4 L483.5,739.4 L483.5,735.7 L484.5,735.7 L484.5,732.0 L485.5,732.0 L485.5,732.0 L486.5,732.0 L486.5,735.5 L487.5,735.5 L487.5,741.3 L488.5,741.3 L488.5,743.6 L489.5,743.6 L489.5,744.5 L490.5,744.5 L490.5,745.5 L491.5,745.5 L491.5,747.3 L492.5,747.3 L492.5,750.5 L493.5,750.5 L493.5,755.2 L494.5,755.2 L494.5,760.0 L495.5,760.0 L495.5,760.0 L496.5,760.0 L496.5,760.0 L497.5,760.0 L497.5,760.0 L498.5,760.0 L498.5,760.0 L499.5,760.0 L499.5,760.0 L500.5,760.0 L500.5,760.0 L501.5,760.0 L501.5,760.0 L502.5,760.0 L502.5,760.0 L503.5,760.0 L503.5,760.0 L504.5,760.0 L504.5,760.0 L505.5,760.0 L505.5,760.0 L506.5,760.0 L506.5,760.0 L507.5,760.0 L507.5,760.0 L508.5,760.0 L508.5,760.0 L509.5,760.0 L509.5,760.0 L510.5,760.0 L510.5,760.0 L511.5,760.0 L511.5,760.0 L512.5,760.0 L512.5,760.0 L513.5,760.0 L513.5,760.0 L514.5,760.0 L514.5,760.0 L515.5,760.0 L515.5,760.0 L516.5,760.0 L516.5,760.0 L517.5,760.0 L517.5,760.0 L518.5,760.0 L518.5,760.0 L519.5,760.0 L519.5,760.0 L520.5,760.0 L520.5,760.0 L521.5,760.0 L521.5,760.0 L522.5,760.0 L522.5,760.0 L523.5,760.0 L523.5,760.0 L524.5,760.0 L524.5,760.0 L525.5,760.0 L525.5,760.0 L526.5,760.0 L526.5,760.0 L527.5,760.0 L527.5,760.0 L528.5,760.0 L528.5,760.0 L529.5,760.0 L529.5,760.0 L530.5,760.0 L530.5,760.0 L531.5,760.0 L531.5,760.0 L532.5,760.0 L532.5,760.0 L533.5,760.0 L533.5,760.0 L534.5,760.0 L534.5,760.0 L535.5,760.0 L535.5,760.0 L536.5,760.0 L536.5,760.0 L537.5,760.0 L537.5,760.0 L538.5,760.0 L538.5,760.0 L539.5,760.0 L539.5,760.0 L540.5,760.0 L540.5,760.0 L541.5,760.0 L541.5,760.0 L542.5,760.0 L542.5,760.0 L543.5,760.0 L543.5,760.0 L544.5,760.0 L544.5,760.0 L545.5,760.0 L545.5,760.0 L546.5,760.0 L546.5,760.0 L547.5,760.0 L547.5,760.0 L548.5,760.0 L548.5,760.0 L549.5,760.0 L549.5,760.0 L550.5,760.0 L550.5,760.0 L551.5,760.0 L551.5,760.0 L552.5,760.0 L552.5,760.0 L553.5,760.0 L553.5,760.0 L554.5,760.0 L554.5,760.0 L555.5,760.0 L555.5,760.0 L556.5,760.0 L556.5,760.0 L557.5,760.0 L557.5,760.0 L558.5,760.0 L558.5,760.0 L559.5,760.0 L559.5,760.0 L560.5,760.0 L560.5,760.0 L561.5,760.0 L561.5,760.0 L562.5,760.0 L562.5,760.0 L563.5,760.0 L563.5,760.0 L564.5,760.0 L564.5,760.0 L565.5,760.0 L565.5,760.0 L566.5,760.0 L566.5,760.0 L567.5,760.0 L567.5,760.0 L568.5,760.0 L568.5,760.0 L569.5,760.0 L569.5,760.0 L570.5,760.0 L570.5,760.0 L571.5,760.0 L571.5,760.0 L572.5,760.0 L572.5,760.0 L573.5,760.0 L573.5,760.0 L574.5,760.0 L574.5,760.0 L575.5,760.0 L575.5,760.0 L576.5,760.0 L576.5,760.0 L577.5,760.0 L577.5,760.0 L578.5,760.0 L578.5,760.0 L579.5,760.0 L579.5,760.0 L580.5,760.0 L580.5,760.0 L581.5,760.0 L581.5,760.0 L582.5,760.0 L582.5,760.0 L583.5,760.0 L583.5,760.0 L584.5,760.0 L584.5,760.0 L585.5,760.0 L585.5,760.0 L586.5,760.0 L586.5,760.0 L587.5,760.0 L587.5,760.0 L588.5,760.0 L588.5,760.0 L589.5,760.0 L589.5,760.0 L590.5,760.0 L590.5,760.0 L591.5,760.0 L591.5,760.0 L592.5,760.0 L592.5,760.0 L593.5,760.0 L593.5,760.0 L594.5,760.0 L594.5,760.0 L595.5,760.0 L595.5,760.0 L596.5,760.0 L596.5,760.0 L597.5,760.0 L597.5,760.0 L598.5,760.0 L598.5,760.0 L599.5,760.0 L599.5,760.0 L600.5,760.0 L600.5,760.0 L601.5,760.0 L601.5,760.0 L602.5,760.0 L602.5,760.0 L603.5,760.0 L603.5,760.0 L604.5,760.0 L604.5,760.0 L605.5,760.0 L605.5,760.0 L606.5,760.0 L606.5,760.0 L607.5,760.0 L607.5,760.0 L608.5,760.0 L608.5,760.0 L609.5,760.0 L609.5,760.0 L610.5,760.0 L610.5,760.0 L611.5,760.0 L611.5,760.0 L612.5,760.0 L612.5,760.0 L613.5,760.0 L613.5,760.0 L614.5,760.0 L614.5,760.0 L615.5,760.0 L615.5,760.0 L616.5,760.0 L616.5,760.0 L617.5,760.0 L617.5,760.0 L618.5,760.0 L618.5,760.0 L619.5,760.0 L619.5,760.0 L620.5,760.0 L620.5,760.0 L621.5,760.0 L621.5,760.0 L622.5,760.0 L622.5,760.0 L623.5,760.0 L623.5,760.0 L624.5,760.0 L624.5,760.0 L625.5,760.0 L625.5,760.0 L626.5,760.0 L626.5,760.0 L627.5,760.0 L627.5,760.0 L628.5,760.0 L628.5,760.0 L629.5,760.0 L629.5,760.0 L630.5,760.0 L630.5,760.0 L631.5,760.0 L631.5,760.0 L632.5,760.0 L632.5,760.0 L633.5,760.0 L633.5,760.0 L634.5,760.0 L634.5,760.0 L635.5,760.0 L635.5,760.0 L636.5,760.0 L636.5,760.0 L637.5,760.0 L637.5,760.0 L638.5,760.0 L638.5,760.0 L639.5,760.0 L639.5,760.0 L640.5,760.0 L640.5,760.0 L641.5,760.0 L641.5,760.0 L642.5,760.0 L642.5,760.0 L643.5,760.0 L643.5,760.0 L644.5,760.0 L644.5,760.0 L645.5,760.0 L645.5,760.0 L646.5,760.0 L646.5,760.0 L647.5,760.0 L647.5,760.0 L648.5,760.0 L648.5,760.0 L649.5,760.0 L649.5,760.0 L650.5,760.0 L650.5,760.0 L651.5,760.0 L651.5,760.0 L652.5,760.0 L652.5,760.0 L653.5,760.0 L653.5,760.0 L654.5,760.0 L654.5,760.0 L655.5,760.0 L655.5,760.0 L656.5,760.0 L656.5,760.0 L657.5,760.0 L657.5,760.0 L658.5,760.0 L658.5,760.0 L659.5,760.0 L659.5,760.0 L660.5,760.0 L660.5,760.0 L661.5,760.0 L661.5,760.0 L662.5,760.0 L662.5,760.0 L663.5,760.0 L663.5,760.0 L664.5,760.0 L664.5,760.0 L665.5,760.0 L665.5,760.0 L666.5,760.0 L666.5,760.0 L667.5,760.0 L667.5,760.0 L668.5,760.0 L668.5,760.0 L669.5,760.0 L669.5,760.0 L670.5,760.0 L670.5,760.0 L671.5,760.0 L671.5,760.0 L672.5,760.0 L672.5,760.0 L673.5,760.0 L673.5,760.0 L674.5,760.0 L674.5,760.0 L675.5,760.0 L675.5,760.0 L676.5,760.0 L676.5,760.0 L677.5,760.0 L677.5,760.0 L678.5,760.0 L678.5,760.0 L679.5,760.0 L679.5,760.0 L680.5,760.0 L680.5,760.0 L681.5,760.0 L681.5,760.0 L682.5,760.0 L682.5,760.0 L683.5,760.0 L683.5,760.0 L684.5,760.0 L684.5,760.0 L685.5,760.0 L685.5,760.0 L686.5,760.0 L686.5,760.0 L687.5,760.0 L687.5,754.2 L688.5,754.2 L688.5,748.5 L689.5,748.5 L689.5,754.2 L690.5,754.2 L690.5,760.0 L691.5,760.0 L691.5,760.0 L692.5,760.0 L692.5,760.0 L693.5,760.0 L693.5,760.0 L694.5,760.0 L694.5,760.0 L695.5,760.0 L695.5,760.0 L696.5,760.0 L696.5,760.0 L697.5,760.0 L697.5,760.0 L698.5,760.0 L698.5,760.0 L699.5,760.0 L699.5,760.0 L700.5,760.0 L700.5,760.0 L701.5,760.0 L701.5,760.0 L702.5,760.0 L702.5,760.0 L703.5,760.0 L703.5,760.0 L704.5,760.0 L704.5,760.0 L705.5,760.0 L705.5,760.0 L706.5,760.0 L706.5,760.0 L707.5,760.0 L707.5,760.0 L708.5,760.0 L708.5,760.0 L709.5,760.0 L709.5,760.0 L710.5,760.0 L710.5,760.0 L711.5,760.0 L711.5,760.0 L712.5,760.0 L712.5,760.0 L713.5,760.0 L713.5,760.0 L714.5,760.0 L714.5,760.0 L715.5,760.0 L715.5,760.0 L716.5,760.0 L716.5,760.0 L717.5,760.0 L717.5,760.0 L718.5,760.0 L718.5,760.0 L719.5,760.0 L719.5,760.0 L720.5,760.0 L720.5,760.0 L721.5,760.0 L721.5,760.0 L722.5,760.0 L722.5,760.0 L723.5,760.0 L723.5,760.0 L724.5,760.0 L724.5,760.0 L725.5,760.0 L725.5,760.0 L726.5,760.0 L726.5,760.0 L727.5,760.0 L727.5,760.0 L728.5,760.0 L728.5,760.0 L729.5,760.0 L729.5,760.0 L730.5,760.0 L730.5,740.8 L731.5,740.8 L731.5,721.2 L732.5,721.2 L732.5,702.2 L733.5,702.2 L733.5,683.0 L734.5,683.0 L734.5,666.1 L735.5,666.1 L735.5,645.1 L736.5,645.1 L736.5,624.0 L737.5,624.0 L737.5,612.1 L738.5,612.1 L738.5,589.2 L739.5,589.2 L739.5,572.5 L740.5,572.5 L740.5,555.0 L741.5,555.0 L741.5,515.0 L742.5,515.0 L742.5,503.0 L743.5,503.0 L743.5,486.0 L744.5,486.0 L744.5,448.0 L745.5,448.0 L745.5,432.0 L746.5,432.0 L746.5,421.5 L747.5,421.5 L747.5,414.3 L748.5,414.3 L748.5,407.2 L749.5,407.2 L749.5,400.0 L750.5,400.0 L750.5,389.6 L751.5,389.6 L751.5,379.2 L752.5,379.2 L752.5,365.5 L753.5,365.5 L753.5,348.5 L754.5,348.5 L754.5,334.5 L755.5,334.5 L755.5,322.4 L756.5,322.4 L756.5,312.5 L757.5,312.5 L757.5,307.5 L758.5,307.5 L758.5,302.5 L759.5,302.5 L759.5,288.4 L760.5,288.4 L760.5,278.3 L761.5,278.3 L761.5,274.8 L762.5,274.8 L762.5,281.7 L763.5,281.7 L763.5,274.4 L764.5,274.4 L764.5,259.3 L765.5,259.3 L765.5,251.1 L766.5,251.1 L766.5,248.6 L767.5,248.6 L767.5,241.4 L768.5,241.4 L768.5,236.0 L769.5,236.0 L769.5,228.4 L770.5,228.4 L770.5,221.4 L771.5,221.4 L771.5,221.0 L772.5,221.0 L772.5,219.5 L773.5,219.5 L773.5,216.7 L774.5,216.7 L774.5,211.4 L775.5,211.4 L775.5,208.5 L776.5,208.5 L776.5,207.2 L777.5,207.2 L777.5,203.5 L778.5,203.5 L778.5,198.5 L779.5,198.5 L779.5,181.8 L780.5,181.8 L780.5,186.8 L781.5,186.8 L781.5,181.4 L782.5,181.4 L782.5,176.5 L783.5,176.5 L783.5,176.2 L784.5,176.2 L784.5,176.0 L785.5,176.0 L785.5,177.4 L786.5,177.4 L786.5,173.4 L787.5,173.4 L787.5,168.5 L788.5,168.5 L788.5,170.0 L789.5,170.0 L789.5,173.8 L790.5,173.8 L790.5,173.9 L791.5,173.9 L791.5,172.4 L792.5,172.4 L792.5,170.8 L793.5,170.8 L793.5,165.4 L794.5,165.4 L794.5,163.5 L795.5,163.5 L795.5,162.5 L796.5,162.5 L796.5,160.6 L797.5,160.6 L797.5,155.1 L798.5,155.1 L798.5,153.6 L799.5,153.6 L799.5,152.5 L800.5,152.5 L800.5,152.7 L801.5,152.7 L801.5,152.8 L802.5,152.8 L802.5,153.0 L803.5,153.0 L803.5,153.1 L804.5,153.1 L804.5,152.1 L805.5,152.1 L805.5,149.3 L806.5,149.3 L806.5,148.3 L807.5,148.3 L807.5,147.2 L808.5,147.2 L808.5,146.2 L809.5,146.2 L809.5,146.5 L810.5,146.5 L810.5,147.1 L811.5,147.1 L811.5,147.8 L812.5,147.8 L812.5,150.7 L813.5,150.7 L813.5,159.2 L814.5,159.2 L814.5,159.9 L815.5,159.9 L815.5,152.1 L816.5,152.1 L816.5,150.6 L817.5,150.6 L817.5,149.6 L818.5,149.6 L818.5,148.6 L818.5,148.6 L818.5,148.6 L819.5,148.6 L819.5,144.0 L819.5,143.7 L819.5,143.9 L820.5,143.9 L820.5,139.7 L820.5,139.7 L820.5,139.9 L821.5,139.9 L821.5,141.1 L821.5,140.8 L821.5,140.5 L822.5,140.5 L822.5,141.2 L822.5,140.9 L822.5,141.6 L823.5,141.6 L823.5,143.0 L823.5,143.6 L823.5,143.3 L824.5,143.3 L824.5,143.2 L824.5,147.7 L824.5,147.8 L825.5,147.8 L825.5,143.9 L825.5,145.3 L825.5,142.5 L826.5,142.5 L826.5,142.4 L826.5,140.9 L826.5,144.5 L827.5,144.5 L827.5,146.2 L827.5,147.1 L827.5,147.6 L828.5,147.6 L828.5,144.7 L828.5,144.9 L828.5,144.0 L829.5,144.0 L829.5,147.3 L829.5,147.0 L829.5,142.9 L830.5,142.9 L830.5,143.8 L830.5,145.7 L830.5,144.7 L831.5,144.7 L831.5,141.4 L831.5,140.1 L831.5,142.0 L832.5,142.0 L832.5,144.5 L832.5,140.6 L832.5,137.7 L833.5,137.7 L833.5,143.9 L833.5,142.9 L833.5,144.0 L834.5,144.0 L834.5,138.9 L834.5,139.8 L834.5,131.6 L835.5,131.6 L835.5,142.2 L835.5,142.2 L835.5,142.5 L836.5,142.5 L836.5,144.1 L836.5,145.9 L836.5,144.6 L837.5,144.6 L837.5,145.0 L837.5,145.6 L837.5,146.1 L838.5,146.1 L838.5,142.1 L838.5,144.1 L838.5,148.1 L839.5,148.1 L839.5,143.9 L839.5,143.6 L839.5,145.1 L840.5,145.1 L840.5,142.1 L840.5,140.5 L840.5,139.2 L841.5,139.2 L841.5,138.5 L841.5,137.2 L841.5,139.1 L842.5,139.1 L842.5,141.4 L842.5,143.4 L842.5,140.3 L843.5,140.3 L843.5,130.8 L843.5,138.7 L843.5,137.8 L844.5,137.8 L844.5,140.0 L844.5,141.8 L844.5,140.6 L845.5,140.6 L845.5,141.4 L845.5,142.9 L845.5,141.0 L846.5,141.0 L846.5,150.3 L846.5,142.4 L846.5,141.5 L847.5,141.5 L847.5,138.4 L847.5,141.3 L847.5,142.4 L848.5,142.4 L848.5,137.2 L848.5,137.0 L848.5,135.3 L849.5,135.3 L849.5,135.9 L849.5,135.8 L849.5,133.4 L850.5,133.4 L850.5,135.4 L850.5,135.5 L850.5,138.7 L851.5,138.7 L851.5,138.6 L851.5,137.1 L851.5,136.0 L852.5,136.0 L852.5,133.8 L852.5,136.1 L852.5,134.3 L853.5,134.3 L853.5,139.4 L853.5,133.3 L853.5,133.8 L854.5,133.8 L854.5,139.4 L854.5,137.6 L854.5,137.3 L855.5,137.3 L855.5,137.1 L855.5,137.5 L855.5,138.8 L856.5,138.8 L856.5,142.3 L856.5,141.8 L856.5,140.8 L857.5,140.8 L857.5,140.8 L857.5,139.6 L857.5,142.1 L858.5,142.1 L858.5,140.2 L858.5,140.7 L858.5,139.1 L859.5,139.1 L859.5,140.6 L859.5,133.0 L859.5,139.4 L860.5,139.4 L860.5,133.5 L860.5,135.9 L860.5,137.3 L861.5,137.3 L861.5,134.5 L861.5,136.5 L861.5,133.7 L862.5,133.7 L862.5,134.6 L862.5,135.4 L862.5,137.2 L863.5,137.2 L863.5,133.3 L863.5,133.3 L863.5,134.6 L864.5,134.6 L864.5,134.7 L864.5,140.6 L864.5,133.6 L865.5,133.6 L865.5,132.5 L865.5,135.8 L865.5,140.3 L866.5,140.3 L866.5,142.6 L866.5,142.1 L866.5,141.7 L867.5,141.7 L867.5,144.9 L867.5,148.2 L867.5,147.5 L868.5,147.5 L868.5,147.0 L868.5,147.3 L868.5,142.5 L869.5,142.5 L869.5,139.5 L869.5,142.1 L869.5,143.5 L870.5,143.5 L870.5,148.3 L870.5,139.8 L870.5,138.5 L871.5,138.5 L871.5,141.5 L871.5,142.5 L871.5,146.2 L872.5,146.2 L872.5,145.4 L872.5,147.0 L872.5,147.3 L873.5,147.3 L873.5,148.5 L873.5,148.5 L873.5,148.0 L874.5,148.0 L874.5,147.1 L874.5,149.3 L874.5,155.7 L875.5,155.7 L875.5,152.9 L875.5,148.6 L875.5,148.2 L876.5,148.2 L876.5,148.2 L876.5,148.9 L876.5,149.7 L877.5,149.7 L877.5,149.1 L877.5,143.2 L877.5,144.3 L878.5,144.3 L878.5,143.2 L878.5,143.3 L878.5,142.6 L879.5,142.6 L879.5,137.7 L879.5,138.4 L879.5,134.8 L880.5,134.8 L880.5,140.2 L880.5,139.2 L880.5,140.6 L881.5,140.6 L881.5,141.5 L881.5,144.4 L881.5,132.3 L882.5,132.3 L882.5,136.5 L882.5,130.2 L882.5,140.5 L883.5,140.5 L883.5,144.3 L883.5,143.2 L883.5,145.4 L884.5,145.4 L884.5,147.6 L884.5,147.6 L884.5,148.5 L885.5,148.5 L885.5,147.8 L885.5,148.2 L885.5,148.0 L886.5,148.0 L886.5,146.6 L886.5,148.0 L886.5,146.9 L887.5,146.9 L887.5,152.4 L887.5,150.5 L887.5,150.6 L888.5,150.6 L888.5,147.4 L888.5,146.9 L888.5,139.2 L889.5,139.2 L889.5,146.9 L889.5,150.4 L889.5,145.4 L890.5,145.4 L890.5,144.2 L890.5,141.8 L890.5,144.1 L891.5,144.1 L891.5,143.8 L891.5,144.4 L891.5,145.8 L892.5,145.8 L892.5,146.1 L892.5,146.0 L892.5,146.5 L893.5,146.5 L893.5,143.9 L893.5,141.9 L893.5,142.5 L894.5,142.5 L894.5,143.4 L894.5,142.7 L894.5,137.5 L895.5,137.5 L895.5,143.0 L895.5,143.8 L895.5,146.3 L896.5,146.3 L896.5,144.5 L896.5,147.3 L896.5,147.6 L897.5,147.6 L897.5,146.4 L897.5,146.7 L897.5,145.6 L898.5,145.6 L898.5,146.3 L898.5,146.1 L898.5,150.0 L899.5,150.0 L899.5,146.3 L899.5,147.8 L899.5,146.5 L900.5,146.5 L900.5,145.0 L900.5,143.7 L900.5,143.5 L901.5,143.5 L901.5,142.9 L901.5,140.0 L901.5,140.6 L902.5,140.6 L902.5,140.9 L902.5,136.2 L902.5,143.5 L903.5,143.5 L903.5,141.6 L903.5,139.1 L903.5,143.0 L904.5,143.0 L904.5,142.0 L904.5,140.9 L904.5,141.5 L905.5,141.5 L905.5,142.5 L905.5,141.8 L905.5,143.5 L906.5,143.5 L906.5,143.9 L906.5,140.2 L906.5,139.6 L907.5,139.6 L907.5,145.6 L907.5,145.7 L907.5,145.5 L908.5,145.5 L908.5,147.0 L908.5,146.1 L908.5,144.4 L909.5,144.4 L909.5,144.6 L909.5,146.1 L909.5,143.2 L910.5,143.2 L910.5,140.8 L910.5,144.3 L910.5,145.7 L911.5,145.7 L911.5,141.9 L911.5,142.5 L911.5,145.7 L912.5,145.7 L912.5,144.7 L912.5,140.0 L912.5,142.6 L913.5,142.6 L913.5,146.0 L913.5,142.1 L913.5,142.0 L914.5,142.0 L914.5,141.1 L914.5,140.4 L914.5,144.2 L915.5,144.2 L915.5,141.0 L915.5,142.0 L915.5,144.1 L916.5,144.1 L916.5,142.3 L916.5,144.5 L916.5,143.0 L917.5,143.0 L917.5,143.2 L917.5,141.8 L917.5,143.8 L918.5,143.8 L918.5,133.7 L918.5,140.8 L918.5,138.3 L919.5,138.3 L919.5,134.1 L919.5,138.2 L919.5,136.4 L920.5,136.4 L920.5,140.6 L920.5,142.4 L920.5,143.7 L921.5,143.7 L921.5,139.7 L921.5,140.9 L921.5,142.1 L922.5,142.1 L922.5,143.8 L922.5,142.9 L922.5,144.0 L923.5,144.0 L923.5,142.6 L923.5,144.1 L923.5,138.0 L924.5,138.0 L924.5,143.7 L924.5,142.8 L924.5,141.9 L925.5,141.9 L925.5,140.5 L925.5,132.4 L925.5,141.5 L926.5,141.5 L926.5,141.1 L926.5,138.0 L926.5,140.9 L927.5,140.9 L927.5,141.5 L927.5,140.4 L927.5,139.8 L928.5,139.8 L928.5,137.6 L928.5,138.5 L928.5,138.7 L929.5,138.7 L929.5,135.3 L929.5,138.1 L929.5,138.0 L930.5,138.0 L930.5,138.8 L930.5,138.0 L930.5,134.6 L931.5,134.6 L931.5,137.9 L931.5,140.2 L931.5,140.5 L932.5,140.5 L932.5,142.7 L932.5,144.7 L932.5,144.5 L933.5,144.5 L933.5,141.9 L933.5,140.6 L933.5,139.9 L934.5,139.9 L934.5,137.5 L934.5,141.3 L934.5,141.4 L935.5,141.4 L935.5,138.2 L935.5,133.7 L935.5,138.8 L936.5,138.8 L936.5,134.0 L936.5,139.6 L936.5,136.2 L937.5,136.2 L937.5,138.4 L937.5,139.2 L937.5,141.3 L938.5,141.3 L938.5,141.3 L938.5,141.1 L938.5,140.2 L939.5,140.2 L939.5,141.3 L939.5,137.0 L939.5,140.2 L940.5,140.2 L940.5,139.9 L940.5,146.7 L940.5,142.1 L941.5,142.1 L941.5,142.1 L941.5,142.6 L941.5,133.0 L942.5,133.0 L942.5,134.3 L942.5,139.7 L942.5,141.0 L943.5,141.0 L943.5,139.7 L943.5,139.5 L943.5,143.6 L944.5,143.6 L944.5,141.1 L944.5,141.1 L944.5,148.0 L945.5,148.0 L945.5,142.4 L945.5,145.2 L945.5,142.8 L946.5,142.8 L946.5,144.9 L946.5,142.4 L946.5,144.0 L947.5,144.0 L947.5,141.0 L947.5,141.4 L947.5,143.2 L948.5,143.2 L948.5,143.7 L948.5,147.4 L948.5,142.0 L949.5,142.0 L949.5,138.5 L949.5,137.7 L949.5,142.0 L950.5,142.0 L950.5,143.6 L950.5,139.3 L950.5,141.3 L951.5,141.3 L951.5,136.2 L951.5,137.8 L951.5,138.3 L952.5,138.3 L952.5,138.1 L952.5,137.5 L952.5,139.1 L953.5,139.1 L953.5,132.1 L953.5,134.9 L953.5,137.3 L954.5,137.3 L954.5,139.4 L954.5,133.5 L954.5,132.6 L955.5,132.6 L955.5,134.8 L955.5,138.1 L955.5,140.8 L956.5,140.8 L956.5,140.0 L956.5,141.0 L956.5,143.1 L957.5,143.1 L957.5,142.9 L957.5,139.8 L957.5,145.6 L958.5,145.6 L958.5,139.9 L958.5,143.6 L958.5,139.5 L959.5,139.5 L959.5,140.1 L959.5,139.4 L959.5,140.4 L960.5,140.4 L960.5,138.6 L960.5,141.0 L960.5,141.2 L961.5,141.2 L961.5,144.1 L961.5,144.2 L961.5,144.7 L962.5,144.7 L962.5,147.6 L962.5,150.8 L962.5,144.0 L963.5,144.0 L963.5,150.4 L963.5,148.3 L963.5,141.2 L964.5,141.2 L964.5,150.4 L964.5,147.4 L964.5,147.2 L965.5,147.2 L965.5,149.5 L965.5,150.7 L965.5,149.4 L966.5,149.4 L966.5,151.4 L966.5,149.2 L966.5,150.9 L967.5,150.9 L967.5,150.6 L967.5,151.6 L967.5,154.0 L968.5,154.0 L968.5,152.8 L968.5,151.5 L968.5,151.8 L969.5,151.8 L969.5,149.6 L969.5,148.6 L969.5,148.9 L970.5,148.9 L970.5,145.0 L970.5,143.6 L970.5,144.8 L971.5,144.8 L971.5,142.7 L971.5,151.2 L971.5,146.1 L972.5,146.1 L972.5,144.3 L972.5,145.7 L972.5,146.0 L973.5,146.0 L973.5,148.7 L973.5,147.8 L973.5,144.0 L974.5,144.0 L974.5,143.4 L974.5,146.4 L974.5,145.0 L975.5,145.0 L975.5,145.6 L975.5,144.8 L975.5,138.8 L976.5,138.8 L976.5,147.2 L976.5,148.6 L976.5,147.0 L977.5,147.0 L977.5,147.1 L977.5,150.5 L977.5,151.9 L978.5,151.9 L978.5,152.0 L978.5,150.2 L978.5,150.3 L979.5,150.3 L979.5,149.5 L979.5,152.1 L979.5,150.0 L980.5,150.0 L980.5,151.8 L980.5,150.8 L980.5,152.9 L981.5,152.9 L981.5,149.9 L981.5,152.2 L981.5,152.2 L982.5,152.2 L982.5,150.1 L982.5,149.6 L982.5,150.4 L983.5,150.4 L983.5,146.9 L983.5,147.1 L983.5,147.1 L984.5,147.1 L984.5,148.3 L984.5,139.6 L984.5,145.7 L985.5,145.7 L985.5,145.7 L985.5,146.7 L985.5,145.8 L986.5,145.8 L986.5,146.5 L986.5,150.6 L986.5,152.0 L987.5,152.0 L987.5,150.6 L987.5,147.7 L987.5,147.1 L988.5,147.1 L988.5,153.3 L988.5,149.2 L988.5,147.9 L989.5,147.9 L989.5,146.0 L989.5,147.1 L989.5,146.1 L990.5,146.1 L990.5,146.9 L990.5,147.0 L990.5,146.8 L991.5,146.8 L991.5,145.0 L991.5,145.6 L991.5,148.2 L992.5,148.2 L992.5,143.9 L992.5,148.0 L992.5,142.7 L993.5,142.7 L993.5,144.8 L993.5,146.7 L993.5,145.3 L994.5,145.3 L994.5,136.4 L994.5,143.7 L994.5,153.4 L995.5,153.4 L995.5,145.9 L995.5,144.4 L995.5,143.9 L996.5,143.9 L996.5,144.6 L996.5,144.4 L996.5,141.7 L997.5,141.7 L997.5,142.4 L997.5,143.0 L997.5,142.7 L998.5,142.7 L998.5,142.8 L998.5,142.2 L998.5,141.8 L999.5,141.8 L999.5,139.0 L999.5,140.4 L999.5,135.9 L1000.5,135.9 L1000.5,140.5 L1000.5,139.6 L1000.5,140.9 L1001.5,140.9 L1001.5,138.4 L1001.5,138.2 L1001.5,141.9 L1002.5,141.9 L1002.5,137.7 L1002.5,132.5 L1002.5,142.4 L1003.5,142.4 L1003.5,140.2 L1003.5,140.1 L1003.5,137.9 L1004.5,137.9 L1004.5,143.2 L1004.5,146.9 L1004.5,144.7 L1005.5,144.7 L1005.5,147.0 L1005.5,149.6 L1005.5,149.9 L1006.5,149.9 L1006.5,151.6 L1006.5,148.6 L1006.5,149.7 L1007.5,149.7 L1007.5,152.9 L1007.5,151.6 L1007.5,151.1 L1008.5,151.1 L1008.5,151.8 L1008.5,154.4 L1008.5,154.2 L1009.5,154.2 L1009.5,152.9 L1009.5,148.3 L1009.5,151.8 L1010.5,151.8 L1010.5,152.1 L1010.5,151.7 L1010.5,152.6 L1011.5,152.6 L1011.5,149.4 L1011.5,148.9 L1011.5,150.0 L1012.5,150.0 L1012.5,152.0 L1012.5,149.9 L1012.5,145.6 L1013.5,145.6 L1013.5,149.8 L1013.5,144.4 L1013.5,148.8 L1014.5,148.8 L1014.5,149.6 L1014.5,149.4 L1014.5,148.6 L1015.5,148.6 L1015.5,154.5 L1015.5,154.9 L1015.5,155.2 L1016.5,155.2 L1016.5,159.9 L1016.5,158.0 L1016.5,160.1 L1017.5,160.1 L1017.5,158.7 L1017.5,161.4 L1017.5,158.2 L1018.5,158.2 L1018.5,154.5 L1018.5,156.1 L1018.5,155.5 L1019.5,155.5 L1019.5,154.4 L1019.5,154.4 L1019.5,158.3 L1020.5,158.3 L1020.5,155.6 L1020.5,154.0 L1020.5,154.2 L1021.5,154.2 L1021.5,153.9 L1021.5,159.1 L1021.5,155.0 L1022.5,155.0 L1022.5,154.5 L1022.5,145.3 L1022.5,143.0 L1023.5,143.0 L1023.5,150.2 L1023.5,145.9 L1023.5,149.0 L1024.5,149.0 L1024.5,148.3 L1024.5,145.3 L1024.5,145.2 L1025.5,145.2 L1025.5,145.8 L1025.5,145.4 L1025.5,145.7 L1026.5,145.7 L1026.5,149.4 L1026.5,149.3 L1026.5,152.1 L1027.5,152.1 L1027.5,150.9 L1027.5,150.3 L1027.5,153.8 L1028.5,153.8 L1028.5,147.0 L1028.5,148.8 L1028.5,147.8 L1029.5,147.8 L1029.5,152.1 L1029.5,153.2 L1029.5,159.0 L1030.5,159.0 L1030.5,151.8 L1030.5,152.6 L1030.5,160.5 L1031.5,160.5 L1031.5,155.0 L1031.5,153.2 L1031.5,147.1 L1032.5,147.1 L1032.5,149.3 L1032.5,150.1 L1032.5,148.4 L1033.5,148.4 L1033.5,147.4 L1033.5,148.7 L1033.5,147.4 L1034.5,147.4 L1034.5,147.7 L1034.5,147.7 L1034.5,147.7 L1035.5,147.7 L1035.5,154.6 L1036.5,154.6 L1036.5,167.9 L1037.5,167.9 L1037.5,189.9 L1038.5,189.9 L1038.5,225.0 L1039.5,225.0 L1039.5,236.0 L1040.5,236.0 L1040.5,247.0 L1041.5,247.0 L1041.5,267.0 L1042.5,267.0 L1042.5,284.4 L1043.5,284.4 L1043.5,301.5 L1044.5,301.5 L1044.5,321.1 L1045.5,321.1 L1045.5,356.0 L1046.5,356.0 L1046.5,374.5 L1047.5,374.5 L1047.5,387.4 L1048.5,387.4 L1048.5,399.5 L1049.5,399.5 L1049.5,424.6 L1050.5,424.6 L1050.5,440.8 L1051.5,440.8 L1051.5,458.4 L1052.5,458.4 L1052.5,469.9 L1053.5,469.9 L1053.5,477.1 L1054.5,477.1 L1054.5,493.5 L1055.5,493.5 L1055.5,516.1 L1056.5,516.1 L1056.5,531.7 L1057.5,531.7 L1057.5,540.2 L1058.5,540.2 L1058.5,548.7 L1059.5,548.7 L1059.5,559.2 L1060.5,559.2 L1060.5,571.6 L1061.5,571.6 L1061.5,584.0 L1062.5,584.0 L1062.5,595.1 L1063.5,595.1 L1063.5,606.0 L1064.5,606.0 L1064.5,615.8 L1065.5,615.8 L1065.5,625.7 L1066.5,625.7 L1066.5,634.1 L1067.5,634.1 L1067.5,641.7 L1068.5,641.7 L1068.5,649.2 L1069.5,649.2 L1069.5,657.5 L1070.5,657.5 L1070.5,666.0 L1071.5,666.0 L1071.5,672.0 L1072.5,672.0 L1072.5,678.0 L1073.5,678.0 L1073.5,684.0 L1074.5,684.0 L1074.5,687.4 L1075.5,687.4 L1075.5,690.8 L1076.5,690.8 L1076.5,694.2 L1077.5,694.2 L1077.5,697.6 L1078.5,697.6 L1078.5,701.1 L1079.5,701.1 L1079.5,704.6 L1080.5,704.6 L1080.5,708.2 L1081.5,708.2 L1081.5,711.7 L1082.5,711.7 L1082.5,713.4 L1083.5,713.4 L1083.5,715.0 L1084.5,715.0 L1084.5,716.7 L1085.5,716.7 L1085.5,718.3 L1086.5,718.3 L1086.5,720.0 L1087.5,720.0 L1087.5,721.8 L1088.5,721.8 L1088.5,723.9 L1089.5,723.9 L1089.5,725.9 L1090.5,725.9 L1090.5,727.9 L1091.5,727.9 L1091.5,730.0 L1092.5,730.0 L1092.5,732.0 L1093.5,732.0 L1093.5,735.2 L1094.5,735.2 L1094.5,738.5 L1095.5,738.5 L1095.5,741.8 L1096.5,741.8 L1096.5,745.0 L1097.5,745.0 L1097.5,752.0 L1098.5,752.0 L1098.5,752.0 L1099.5,752.0 L1099.5,752.0 L1100.5,752.0 L1100.5,743.0 L1101.5,743.0 L1101.5,743.0 L1102.5,743.0 L1102.5,743.0 L1103.5,743.0 L1103.5,749.4 L1104.5,749.4 L1104.5,750.2 L1105.5,750.2 L1105.5,751.0 L1106.5,751.0 L1106.5,749.0 L1107.5,749.0 L1107.5,745.7 L1108.5,745.7 L1108.5,743.2" fill="none" stroke="#00ffff" stroke-width="1.15" stroke-linejoin="miter"/>
<circle cx="743.5" cy="485.3" r="3" fill="#fff"/>
</g>
<rect x="743" y="742" width="3" height="9" fill="#ff0000"/>
<rect x="852" y="742" width="3" height="9" fill="#00ffff"/>
<rect x="476.5" y="66.5" width="176" height="22" fill="#141414" stroke="#43434d" stroke-width="1"/>
<rect x="483" y="73" width="9" height="9" fill="#00ffff"/>
</svg>
<div class="t" style="left:459px;top:38px">2.56</div>
<div class="t" style="left:557px;top:38px">2.562</div>
<div class="t" style="left:658px;top:38px">2.564</div>
<div class="t" style="left:760px;top:38px">2.566</div>
<div class="t" style="left:861px;top:38px">2.568</div>
<div class="t" style="left:967px;top:38px">2.57</div>
<div class="t" style="left:1065px;top:38px">2.572</div>
<div class="t" style="left:441px;top:116px">1.5</div>
<div class="t" style="left:455px;top:236px">1</div>
<div class="t" style="left:441px;top:355px">0.5</div>
<div class="t" style="left:455px;top:475px">0</div>
<div class="t" style="left:434px;top:594px">-0.5</div>
<div class="t" style="left:448px;top:714px">-1</div>
<div class="t" style="left:495px;top:71px">Inductor step response</div>
<div class="t" style="left:661px;top:58px">x0 2.56534</div>
<div class="t" style="left:864px;top:58px">x1 2.56749</div>
<div class="t" style="left:864px;top:73px">x1-x0 2.14450 ms</div>
<div class="t" style="left:864px;top:88px">1/dt 466.3 Hz</div>
</div></body></html>
